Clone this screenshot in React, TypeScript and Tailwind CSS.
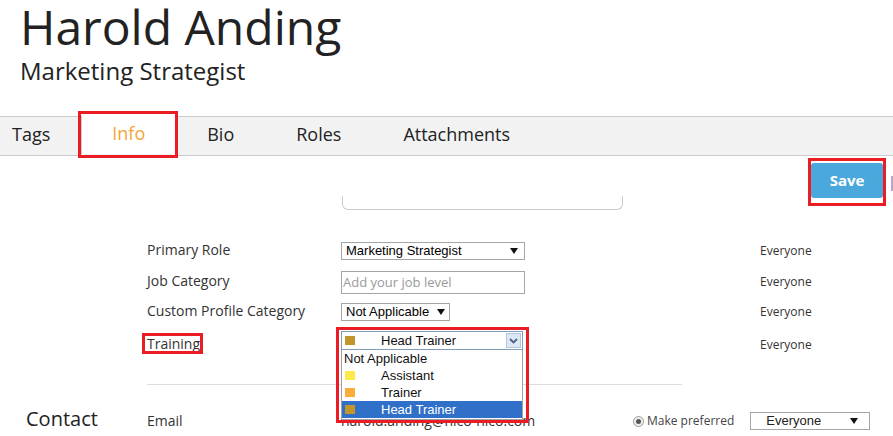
import React from 'react';

const tabs = ['Tags', 'Info', 'Bio', 'Roles', 'Attachments'];

function Caret() {
  return (
    <svg width="8" height="6" viewBox="0 0 8 6" className="shrink-0">
      <polygon points="0,0 8,0 4,6" fill="#111" />
    </svg>
  );
}

function Swatch({ color }: { color: string }) {
  return <span className="inline-block w-[10px] h-[9px] shrink-0" style={{ backgroundColor: color }} />;
}

const trainingOptions = [
  { label: 'Assistant', color: '#fdea48' },
  { label: 'Trainer', color: '#fbad3a' },
  { label: 'Head Trainer', color: '#c4952a' },
];

function TrainingDropdown() {
  return (
    <div className="absolute left-0 top-0 z-10 w-[182px] font-['Liberation_Sans',Arial,sans-serif] text-[13px] text-[#111]">
      {/* annotation box */}
      <div className="absolute -left-[5px] -top-[4px] -right-[6px] -bottom-[3px] border-[3px] border-[#ec1c24] pointer-events-none" />
      <div className="relative h-[19px] bg-white border border-[#7f9db9] flex items-center">
        <span className="ml-[3px]"><Swatch color="#c4952a" /></span>
        <span className="ml-[26px]">Head Trainer</span>
        <span className="ml-auto mr-px h-[15px] w-[15px] border border-[#b3c5e2] bg-[#dde8f7] flex items-center justify-center">
          <svg width="9" height="6" viewBox="0 0 9 6">
            <path d="M1 1 L4.5 4.5 L8 1" stroke="#4d6185" strokeWidth="1.8" fill="none" />
          </svg>
        </span>
      </div>
      <div className="bg-white border-x border-b border-[#a0a0a0] pb-[1px]">
        <div className="h-[17px] flex items-center pl-[2px]">Not Applicable</div>
        {trainingOptions.map((o, i) => (
          <div
            key={o.label}
            className={
              i === trainingOptions.length - 1
                ? 'h-[17px] flex items-center pl-[3px] bg-[#3070c8] text-white'
                : 'h-[17px] flex items-center pl-[3px]'
            }
          >
            <Swatch color={o.color} />
            <span className="ml-[26px]">{o.label}</span>
          </div>
        ))}
      </div>
    </div>
  );
}

export default function App() {
  return (
    <div className="w-[893px] h-[436px] overflow-hidden bg-white font-['Open_Sans',sans-serif] text-[#333]">
      {/* header */}
      <div className="h-[116px] pl-[20px] pt-[1px]">
        <h1 className="text-[48px] leading-[52px] -mb-[4px] text-[#222] font-normal">Harold Anding</h1>
        <p className="mt-[9px] text-[24px] leading-[26px] text-[#222]">Marketing Strategist</p>
      </div>

      {/* tabs */}
      <div className="h-[40px] border-y border-[#cccccc] bg-[#f2f2f2] flex text-[18px] text-[#222]">
        {tabs.map((t) =>
          t === 'Info' ? (
            <div key={t} className="relative h-full -my-px border-x border-[#cccccc] bg-white px-[30px] pb-[3px] flex items-center text-[#f5a43c]">
              <div className="absolute -left-[4px] -right-[3px] -top-[5px] -bottom-[4px] border-[3px] border-[#ec1c24]" />
              {t}
            </div>
          ) : (
            <div key={t} className={t === 'Tags' ? 'pl-[12px] pr-[31px] pb-[3px] flex items-center' : 'px-[31px] pb-[3px] flex items-center'}>
              {t}
            </div>
          )
        )}
      </div>

      {/* save row */}
      <div className="flex items-start h-[54px]">
        <div className="ml-[342px] mt-[40px] w-[281px] h-[14px] border-x border-b border-[#cccccc] rounded-b-[6px]" />
        <div className="relative ml-auto mt-[7px]">
          <div className="absolute -left-[3px] -right-[3px] -top-[5px] -bottom-[8px] border-[3px] border-[#ec1c24]" />
          <button className="w-[72px] h-[35px] rounded-[3px] bg-[#4aa8dc] text-white font-bold text-[15px]">Save</button>
        </div>
        <div className="ml-[8px] mr-0 mt-[20px] w-[2px] h-[15px] bg-[#b9a6cb]" />
      </div>

      {/* form */}
      <div className="pl-[147px] text-[14px]">
        <div className="mt-[29px] h-[24px] flex items-center">
          <div className="w-[194px] -mt-[3px]">Primary Role</div>
          <div className="w-[419px]">
            <div className="w-[184px] h-[18px] border border-[#a6a6a6] flex items-center px-[4px] font-['Liberation_Sans',Arial,sans-serif] text-[13px] text-black">
              <span>Marketing Strategist</span>
              <span className="ml-auto mr-[2px]"><Caret /></span>
            </div>
          </div>
          <div className="text-[12px]">Everyone</div>
        </div>

        <div className="mt-[7px] h-[24px] flex items-center">
          <div className="w-[194px] -mt-[3px]">Job Category</div>
          <div className="w-[419px]">
            <input
              placeholder="Add your job level"
              className="w-[184px] h-[23px] border border-[#a6a6a6] px-[1px] text-[13px] outline-none placeholder:text-[#9a9a9a]"
            />
          </div>
          <div className="text-[12px]">Everyone</div>
        </div>

        <div className="mt-[6px] h-[24px] flex items-center">
          <div className="w-[194px] -mt-[3px]">Custom Profile Category</div>
          <div className="w-[419px]">
            <div className="w-[109px] h-[18px] border border-[#a6a6a6] flex items-center px-[4px] font-['Liberation_Sans',Arial,sans-serif] text-[13px] text-black">
              <span>Not Applicable</span>
              <span className="ml-auto"><Caret /></span>
            </div>
          </div>
          <div className="text-[12px]">Everyone</div>
        </div>

        <div className="mt-[7px] h-[28px] flex items-center">
          <div className="w-[194px] -mt-[3px]">
            <span className="relative">
              <span className="absolute -left-[5px] -right-[3px] -top-[1px] -bottom-[1px] border-[3px] border-[#ec1c24]" />
              Training
            </span>
          </div>
          <div className="w-[419px] self-start relative h-[19px]">
            <TrainingDropdown />
          </div>
          <div className="text-[12px]">Everyone</div>
        </div>

        <div className="mt-[25px] w-[535px] h-px bg-[#dddddd]" />
      </div>

      {/* contact */}
      <div className="mt-[24px] h-[24px] flex items-center text-[14px]">
        <div className="w-[147px] pl-[26px] text-[20px] text-[#222] -mt-[5px]">Contact</div>
        <div className="w-[194px] -mt-[2px]">Email</div>
        <div className="w-[292px] -mt-[2px]">harold.anding@nico-nico.com</div>
        <span className="w-[11px] h-[11px] rounded-full border border-[#9c9c9c] bg-[#eeeeee] flex items-center justify-center">
          <span className="w-[5px] h-[5px] rounded-full bg-[#555]" />
        </span>
        <span className="ml-[3px] text-[12px] text-[#444]">Make preferred</span>
        <div className="ml-[16px] w-[120px] h-[18px] border border-[#a6a6a6] flex items-center pl-[15px] pr-[11px] font-['Liberation_Sans',Arial,sans-serif] text-[13px] text-[#222]">
          <span>Everyone</span>
          <span className="ml-auto"><Caret /></span>
        </div>
      </div>
    </div>
  );
}
